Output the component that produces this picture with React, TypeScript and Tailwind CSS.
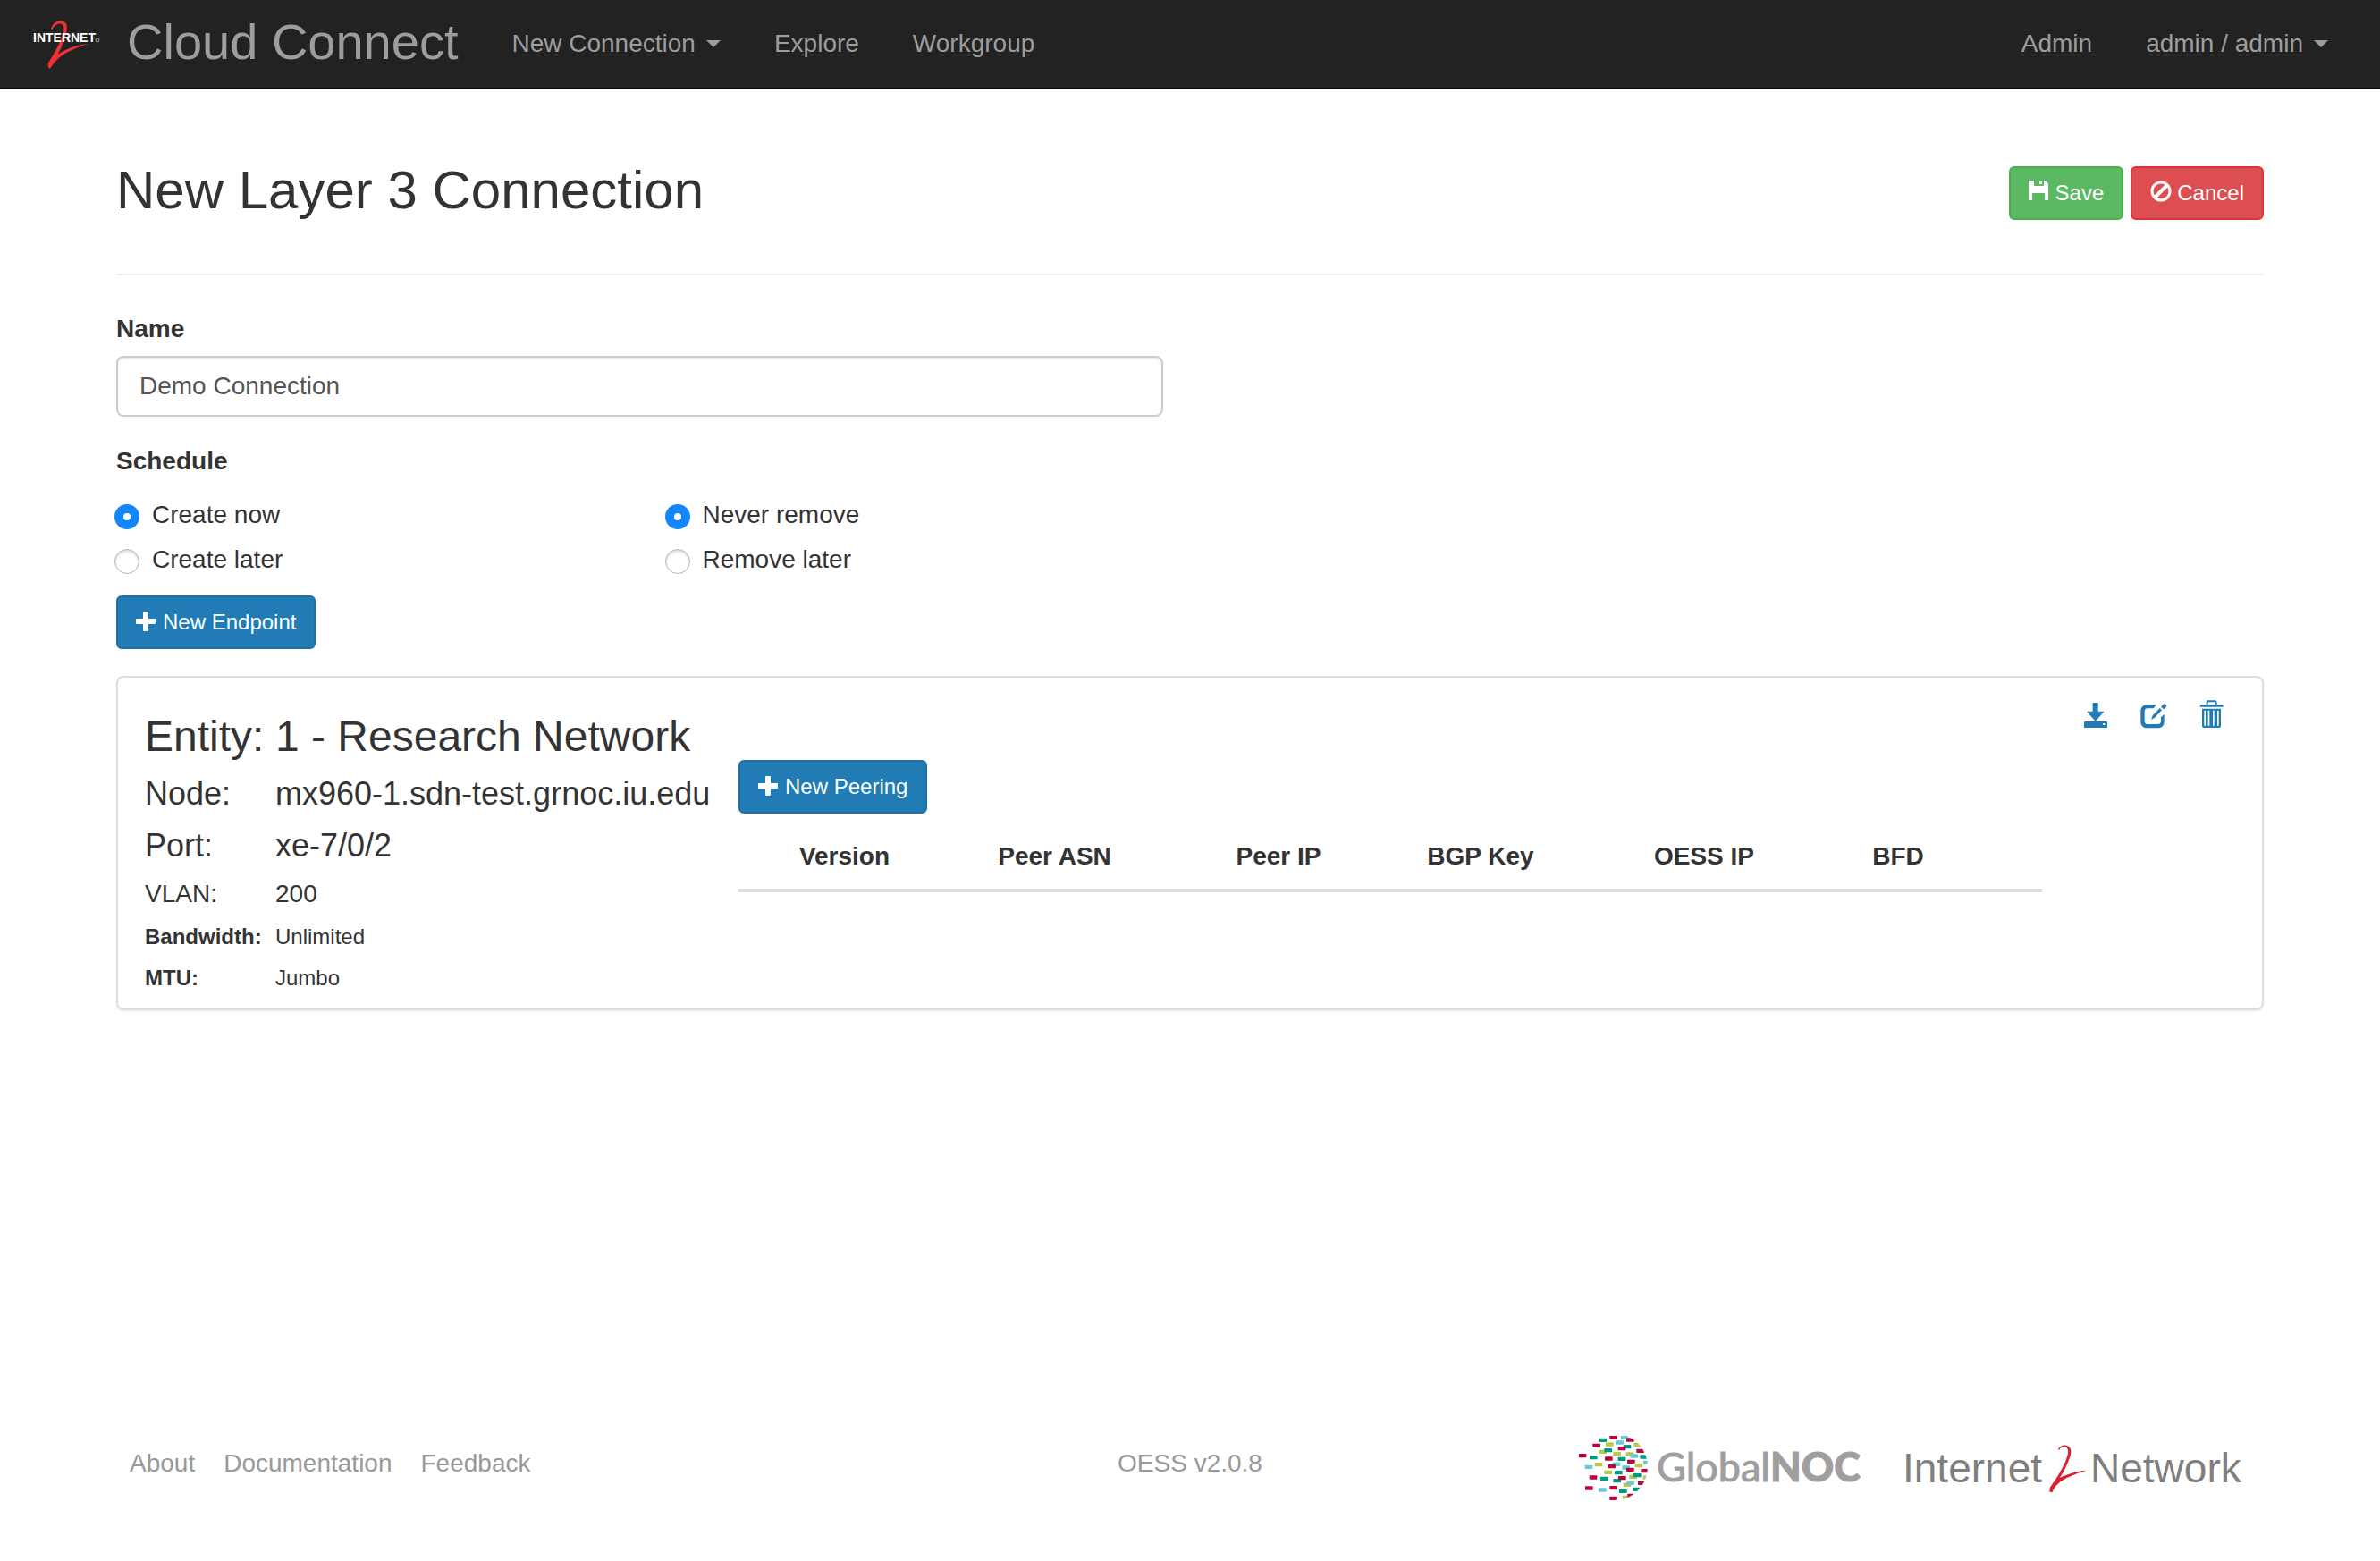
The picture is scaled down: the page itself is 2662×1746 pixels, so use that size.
import { useState } from "react";
import type { ReactNode } from "react";

const RED = "#b8063c";
const TEAL = "#009a82";
const LIME = "#b9c84a";
const CYAN = "#66cbd9";

const DOTS: { color: string; at: [number, number][] }[] = [
  { color: LIME, at: [[181, 107], [275, 108], [158, 132], [206, 139], [249, 140], [144, 175], [279, 178], [176, 201], [260, 216], [306, 218], [240, 243], [237, 285]] },
  { color: CYAN, at: [[231, 84], [215, 101], [263, 146], [111, 183], [204, 174], [236, 185], [307, 168], [251, 237], [157, 260]] },
  { color: TEAL, at: [[158, 93], [240, 115], [176, 127], [127, 151], [222, 156], [296, 149], [211, 202], [274, 211], [163, 222], [206, 229], [226, 264], [272, 258]] },
  { color: RED, at: [[194, 84], [250, 92], [137, 111], [222, 121], [284, 129], [90, 145], [178, 155], [253, 165], [188, 181], [250, 192], [299, 196], [126, 218], [223, 220], [289, 237], [194, 253], [112, 254], [254, 279], [194, 288]] },
];

function BrandMark() {
  return (
    <svg className="h-[60px] w-[76px] shrink-0" viewBox="36 20 76 60" role="img" aria-label="Internet2">
      <g transform="translate(20 10) scale(0.33333)">
        <path
          fill="#f03035"
          d="M111 68C117 52 131 42 146 43C164 45 168 62 162 85C156 110 146 135 134 156C162 136 200 122 240 120C200 130 162 147 137 168C124 180 115 192 107 205C102 199 99 192 102 184C112 168 125 148 136 124C146 102 156 82 154 66C152 50 136 50 127 58C120 63 117 68 115 73Z"
        />
      </g>
      <text x="37" y="48" fill="#ffffff" fontSize="14" fontWeight="700" fontFamily="'Liberation Sans', sans-serif">
        INTERNET
      </text>
      <circle cx="109" cy="46" r="2" fill="none" stroke="#9d9d9d" />
    </svg>
  );
}

function GlobalNocLogo() {
  return (
    <svg className="h-[72px] w-[320px] shrink-0" viewBox="1766 1606 320 72" role="img" aria-label="GlobalNOC">
      <defs>
        <clipPath id="globe">
          <path d="M70 70H197A108 108 0 0 1 197 294H70Z" />
        </clipPath>
      </defs>
      <g transform="translate(1740 1580) scale(0.33333)" clipPath="url(#globe)">
        {DOTS.map(({ color, at }) =>
          at.map(([x, y]) => <rect key={`${x}-${y}`} x={x - 13} y={y - 7} width="26" height="13" rx="2" fill={color} />),
        )}
      </g>
      <text x="1853" y="1657" fill="#9f9f9f" fontSize="45" fontFamily="Lato, sans-serif">
        <tspan stroke="#9f9f9f" strokeWidth="1">Global</tspan>
        <tspan fontWeight="900" stroke="#9f9f9f" strokeWidth="1">NOC</tspan>
      </text>
    </svg>
  );
}

function Internet2Logo() {
  return (
    <svg className="h-[72px] w-[380px] shrink-0" viewBox="2128 1606 380 72" role="img" aria-label="Internet2 Network">
      <g fill="#7f7f7f" fontSize="46" fontFamily="'Liberation Sans', sans-serif">
        <text x="2128" y="1658">Internet</text>
        <text x="2338" y="1658">Network</text>
      </g>
      <g transform="translate(2100 1580) scale(0.33333)">
        <path
          fill="#d9202f"
          d="M606 125C609 113 622 107 634 110C650 115 652 130 646 148C638 172 626 198 612 218C638 206 668 196 702 194C668 204 638 216 616 230C602 240 592 252 586 268L578 266C576 258 578 250 584 244C600 222 620 190 632 160C640 140 644 124 632 115C622 112 614 116 609 126Z"
        />
      </g>
    </svg>
  );
}

function Caret() {
  return (
    <svg className="ml-3 h-2 w-4" viewBox="0 0 16 8" aria-hidden="true">
      <path fill="currentColor" d="M0 0H16L8 8Z" />
    </svg>
  );
}

function PlusIcon() {
  return (
    <svg className="mb-0.5 size-6" viewBox="1 0 24 24" aria-hidden="true">
      <path fill="currentColor" d="M10 1h4a1 1 0 0 1 1 1v7h7a1 1 0 0 1 1 1v4a1 1 0 0 1-1 1h-7v7a1 1 0 0 1-1 1h-4a1 1 0 0 1-1-1v-7H2a1 1 0 0 1-1-1v-4a1 1 0 0 1 1-1h7V2a1 1 0 0 1 1-1z" />
    </svg>
  );
}

function SaveIcon() {
  return (
    <svg className="mb-1 size-6" viewBox="0 0 24 24" aria-hidden="true">
      <path fill="currentColor" d="M0 0H6V6H17V0H19L22 4V22H18V14H4V22H0ZM12 0H15V4H12Z" />
    </svg>
  );
}

function BanIcon() {
  return (
    <svg className="mb-1 size-6" viewBox="0 0 24 24" fill="none" stroke="currentColor" strokeWidth="3" aria-hidden="true">
      <circle cx="12" cy="12" r="10" />
      <path strokeWidth="4" d="M5.5 18.5L18.5 5.5" />
    </svg>
  );
}

function DownloadIcon() {
  return (
    <svg className="h-8 w-7" viewBox="30 27 84 96" aria-hidden="true">
      <path fill="currentColor" fillRule="evenodd" d="M62 36H80V65H101L71 98L42 65H62ZM35 99H109L111 101V120H33V101ZM96 105V111H103V105Z" />
    </svg>
  );
}

function EditIcon() {
  return (
    <svg className="h-8 w-[30px]" viewBox="222 27 90 96" aria-hidden="true">
      <path fill="currentColor" d="M276 43H246C231 43 223 51 223 66V98C223 113 231 121 246 121H279C294 121 302 113 302 98V74L291 85V97C291 104 288 108 280 108H246C239 108 236 104 236 97V67C236 59 239 55 246 55H266Z" />
      <path fill="currentColor" d="M258 93L263 79L287 54L294 61L270 86ZM291 50L298 43Q302 38 307 41Q312 45 309 50L300 58Z" />
    </svg>
  );
}

function TrashIcon() {
  return (
    <svg className="h-8 w-7" viewBox="420 27 84 96" aria-hidden="true">
      <path fill="currentColor" fillRule="evenodd" d="M446 28H475L479 33V42H497L500 45V50H422V45L425 42H443V33ZM449 34V42H473V34Z" />
      <path fill="currentColor" fillRule="evenodd" d="M429 56H492V114Q492 120 486 120H435Q429 120 429 114ZM436 62V113H441V62ZM449 62V113H454V62ZM465 62V113H470V62ZM480 62V113H485V62Z" />
    </svg>
  );
}

function Button({ tone, icon, children }: { tone: string; icon: ReactNode; children: ReactNode }) {
  return (
    <button type="button" className={`flex h-[60px] cursor-pointer items-center gap-1.5 rounded-md border-2 px-5 text-2xl leading-9 text-white ${tone}`}>
      {icon}
      <span>{children}</span>
    </button>
  );
}

const PRIMARY = "bg-[#217bb5] border-[#1f6fa5]";

function Radio({ name, label, checked, onSelect }: { name: string; label: string; checked: boolean; onSelect: () => void }) {
  return (
    <label className="flex h-10 items-center gap-3.5">
      <input
        type="radio"
        name={name}
        checked={checked}
        onChange={onSelect}
        className="-ml-0.5 mt-1 size-7 appearance-none rounded-full border border-[#b5b5b5] bg-white shadow-[inset_0_2px_3px_rgba(0,0,0,0.15)] checked:border-[10px] checked:border-[#1486fb] checked:shadow-none"
      />
      {label}
    </label>
  );
}

const DETAILS = [
  { label: "Entity:", value: "1 - Research Network", row: "text-[48px] leading-[53px] mb-[18px]", head: "font-normal" },
  { label: "Node:", value: "mx960-1.sdn-test.grnoc.iu.edu", row: "text-4xl leading-10 mb-[18px]", head: "font-normal" },
  { label: "Port:", value: "xe-7/0/2", row: "text-4xl leading-10 mb-[18px]", head: "font-normal" },
  { label: "VLAN:", value: "200", row: "text-[28px] leading-8 mb-[18px]", head: "font-normal" },
  { label: "Bandwidth:", value: "Unlimited", row: "text-2xl leading-7 mb-[18px]", head: "font-bold" },
  { label: "MTU:", value: "Jumbo", row: "text-2xl leading-7", head: "font-bold" },
];

const COLUMNS = [
  { label: "Version", width: "w-[237px]" },
  { label: "Peer ASN", width: "w-[233px]" },
  { label: "Peer IP", width: "w-[268px]" },
  { label: "BGP Key", width: "w-[184px]" },
  { label: "OESS IP", width: "w-[316px]" },
  { label: "BFD", width: "w-[118px]" },
  { label: "", width: "w-[102px]" },
];

const ACTIONS = [
  { label: "Download", icon: <DownloadIcon /> },
  { label: "Edit", icon: <EditIcon /> },
  { label: "Delete", icon: <TrashIcon /> },
];

export default function App() {
  const [name, setName] = useState("Demo Connection");
  const [create, setCreate] = useState("Create now");
  const [remove, setRemove] = useState("Never remove");

  return (
    <div className="flex min-h-screen flex-col bg-white font-['Liberation_Sans',Arial,sans-serif] text-[28px] leading-10 text-[#333]">
      <nav className="flex h-[100px] items-center border-b-2 border-[#080808] bg-[#222] pr-[58px] pl-9 text-[#9d9d9d]">
        <a href="#home" className="flex items-center gap-[30px]">
          <BrandMark />
          <span className="pb-1 text-[56px] leading-[56px]">Cloud Connect</span>
        </a>
        <div className="ml-[60px] flex gap-[60px]">
          <a href="#new" className="flex items-center">New Connection<Caret /></a>
          <a href="#explore">Explore</a>
          <a href="#workgroup">Workgroup</a>
        </div>
        <div className="ml-auto flex gap-[60px]">
          <a href="#admin">Admin</a>
          <a href="#user" className="flex items-center">admin / admin<Caret /></a>
        </div>
      </nav>

      <main className="px-[130px]">
        <header className="flex items-start justify-between border-b-2 border-[#eee] pt-20 pb-[60px]">
          <h1 className="text-[60px] leading-[66px] font-normal">New Layer 3 Connection</h1>
          <div className="flex gap-2 pt-1.5">
            <Button tone="bg-[#5cb963] border-[#4cae54]" icon={<SaveIcon />}>Save</Button>
            <Button tone="bg-[#dc4e50] border-[#d9363a]" icon={<BanIcon />}>Cancel</Button>
          </div>
        </header>

        <form className="pt-10" onSubmit={(e) => e.preventDefault()}>
          <div className="grid grid-cols-2 gap-[60px]">
            <div>
              <label htmlFor="name" className="mb-2.5 block font-bold">Name</label>
              <input
                id="name"
                value={name}
                onChange={(e) => setName(e.target.value)}
                className="block h-[68px] w-full rounded-lg border-2 border-[#ccc] px-6 text-[#555] shadow-[inset_0_2px_2px_rgba(0,0,0,0.075)]"
              />
            </div>
          </div>
          <fieldset className="mt-[30px]">
            <legend className="font-bold">Schedule</legend>
            <div className="mt-5 grid grid-cols-4 gap-[60px]">
              <div className="flex flex-col gap-2.5">
                {["Create now", "Create later"].map((o) => (
                  <Radio key={o} name="create" label={o} checked={create === o} onSelect={() => setCreate(o)} />
                ))}
              </div>
              <div className="flex flex-col gap-2.5">
                {["Never remove", "Remove later"].map((o) => (
                  <Radio key={o} name="remove" label={o} checked={remove === o} onSelect={() => setRemove(o)} />
                ))}
              </div>
            </div>
          </fieldset>
          <div className="mt-5 flex">
            <Button tone={PRIMARY} icon={<PlusIcon />}>New Endpoint</Button>
          </div>
        </form>

        <section className="mt-[30px] flex items-start rounded-lg border-2 border-[#ddd] pr-[42px] pb-5 pl-[30px] shadow-[0_2px_2px_rgba(0,0,0,0.05)]">
          <dl className="mt-[39px] w-[664px] shrink-0 whitespace-nowrap">
            {DETAILS.map((d) => (
              <div key={d.label} className={`flex ${d.row}`}>
                <dt className={`w-[146px] ${d.head}`}>{d.label}</dt>
                <dd>{d.value}</dd>
              </div>
            ))}
          </dl>
          <div className="mt-[92px] min-w-0 flex-1">
            <div className="flex">
              <Button tone={PRIMARY} icon={<PlusIcon />}>New Peering</Button>
            </div>
            <table className="mt-2 w-full table-fixed">
              <thead>
                <tr className="border-b-4 border-[#ddd]">
                  {COLUMNS.map((c) => (
                    <th key={c.label} scope="col" className={`pt-5 pb-4 text-center font-bold ${c.width}`}>{c.label}</th>
                  ))}
                </tr>
              </thead>
              <tbody />
            </table>
          </div>
          <div className="mt-[25px] ml-[46px] flex gap-9 text-[#217bb5]">
            {ACTIONS.map((a) => (
              <button key={a.label} type="button" aria-label={a.label} className="cursor-pointer">{a.icon}</button>
            ))}
          </div>
        </section>
      </main>

      <footer className="mt-auto grid grid-cols-[1fr_auto_1fr] items-start px-[145px] pb-[68px] text-[#999]">
        <div className="flex gap-8 pt-[11px]">
          <a href="#about">About</a>
          <a href="#docs">Documentation</a>
          <a href="#feedback">Feedback</a>
        </div>
        <p className="pt-[11px]">OESS v2.0.8</p>
        <div className="mr-[9px] flex justify-end gap-[42px]">
          <GlobalNocLogo />
          <Internet2Logo />
        </div>
      </footer>
    </div>
  );
}
